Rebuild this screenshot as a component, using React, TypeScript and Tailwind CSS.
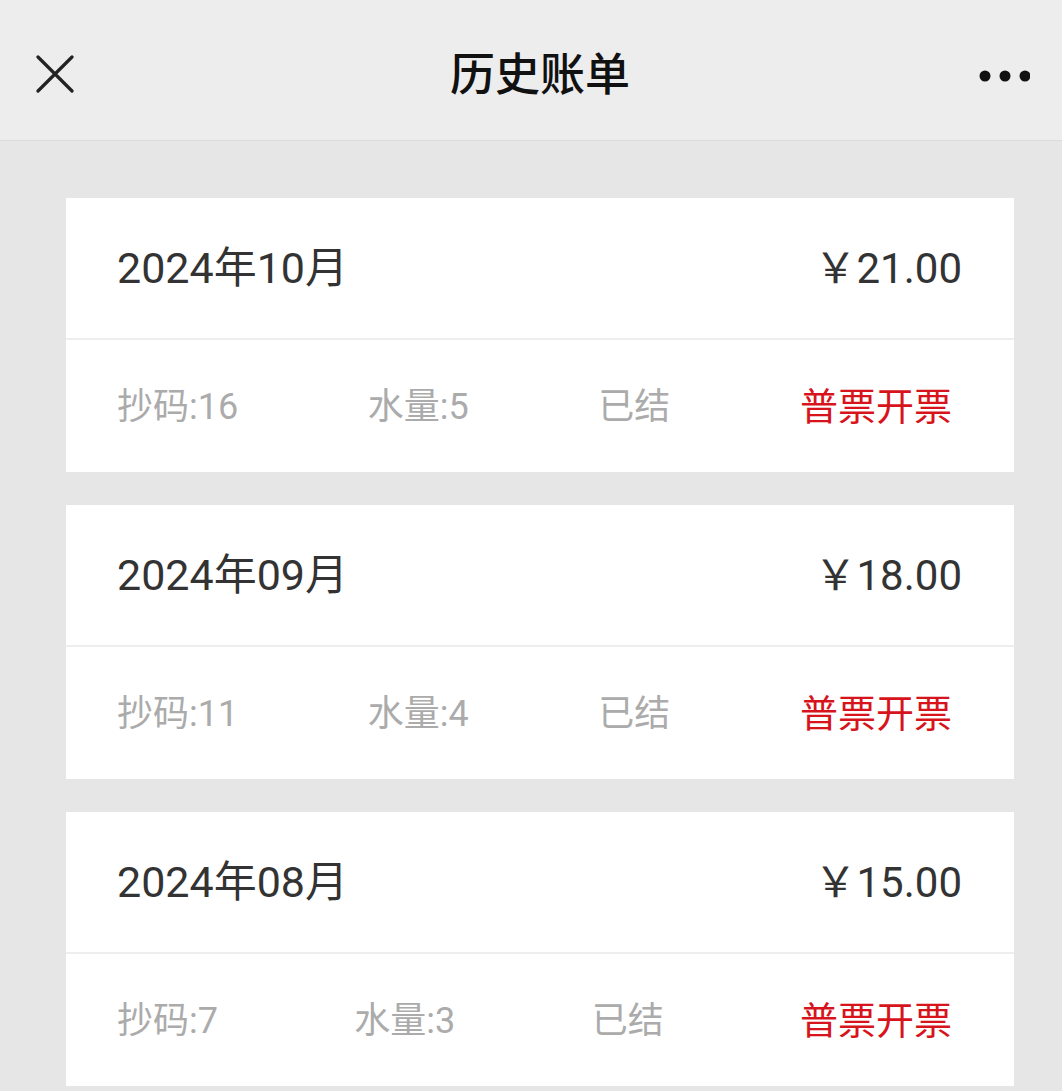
import React from 'react'

type Bill = {
  month: string
  amount: string
  code: number
  water: number
}

const bills: Bill[] = [
  { month: '2024年10月', amount: '21.00', code: 16, water: 5 },
  { month: '2024年09月', amount: '18.00', code: 11, water: 4 },
  { month: '2024年08月', amount: '15.00', code: 7, water: 3 },
]

const font = { fontFamily: 'Roboto, "Noto Sans CJK SC", sans-serif' }

const BillCard: React.FC<{ bill: Bill }> = ({ bill }) => (
  <div className="ml-[66px] w-[948px] bg-white">
    <div className="flex h-[140px] items-center justify-between pl-[51px] pr-[52px] text-[43px] text-[#333]">
      <span>{bill.month}</span>
      <span className="text-[42px]">￥{bill.amount}</span>
    </div>
    <div className="h-[2px] bg-[#eeeeee]" />
    <div className="flex h-[132px] items-center justify-between pl-[51px] pr-[62px] pt-[2px] text-[36px] text-[#ababab]">
      <span>抄码:{bill.code}</span>
      <span>水量:{bill.water}</span>
      <span>已结</span>
      <span className="text-[38px] text-[#d7141c]">普票开票</span>
    </div>
  </div>
)

export default function App() {
  return (
    <div className="min-h-[1091px] w-[1062px] bg-[#e6e6e6]" style={font}>
      <header className="relative flex h-[141px] items-center justify-between border-b border-[#dcdcdc] bg-[#ededed] px-[36px]">
        <svg width="38" height="38" viewBox="0 0 38 38" className="mt-[8px]">
          <path d="M2 2 L36 36 M36 2 L2 36" stroke="#222" strokeWidth="3.2" strokeLinecap="round" />
        </svg>
        <h1 className="absolute left-[540px] top-[76px] -translate-x-1/2 -translate-y-1/2 text-[45px] font-medium text-[#111]">
          历史账单
        </h1>
        <svg width="52" height="14" viewBox="0 0 52 14" className="-mr-[4px] mt-[12px]">
          <circle cx="7" cy="7" r="5.5" fill="#111" />
          <circle cx="27" cy="7" r="5.5" fill="#111" />
          <circle cx="47" cy="7" r="5.5" fill="#111" />
        </svg>
      </header>
      <main className="flex flex-col gap-[33px] pt-[57px]">
        {bills.map((bill) => (
          <BillCard key={bill.month} bill={bill} />
        ))}
      </main>
    </div>
  )
}
